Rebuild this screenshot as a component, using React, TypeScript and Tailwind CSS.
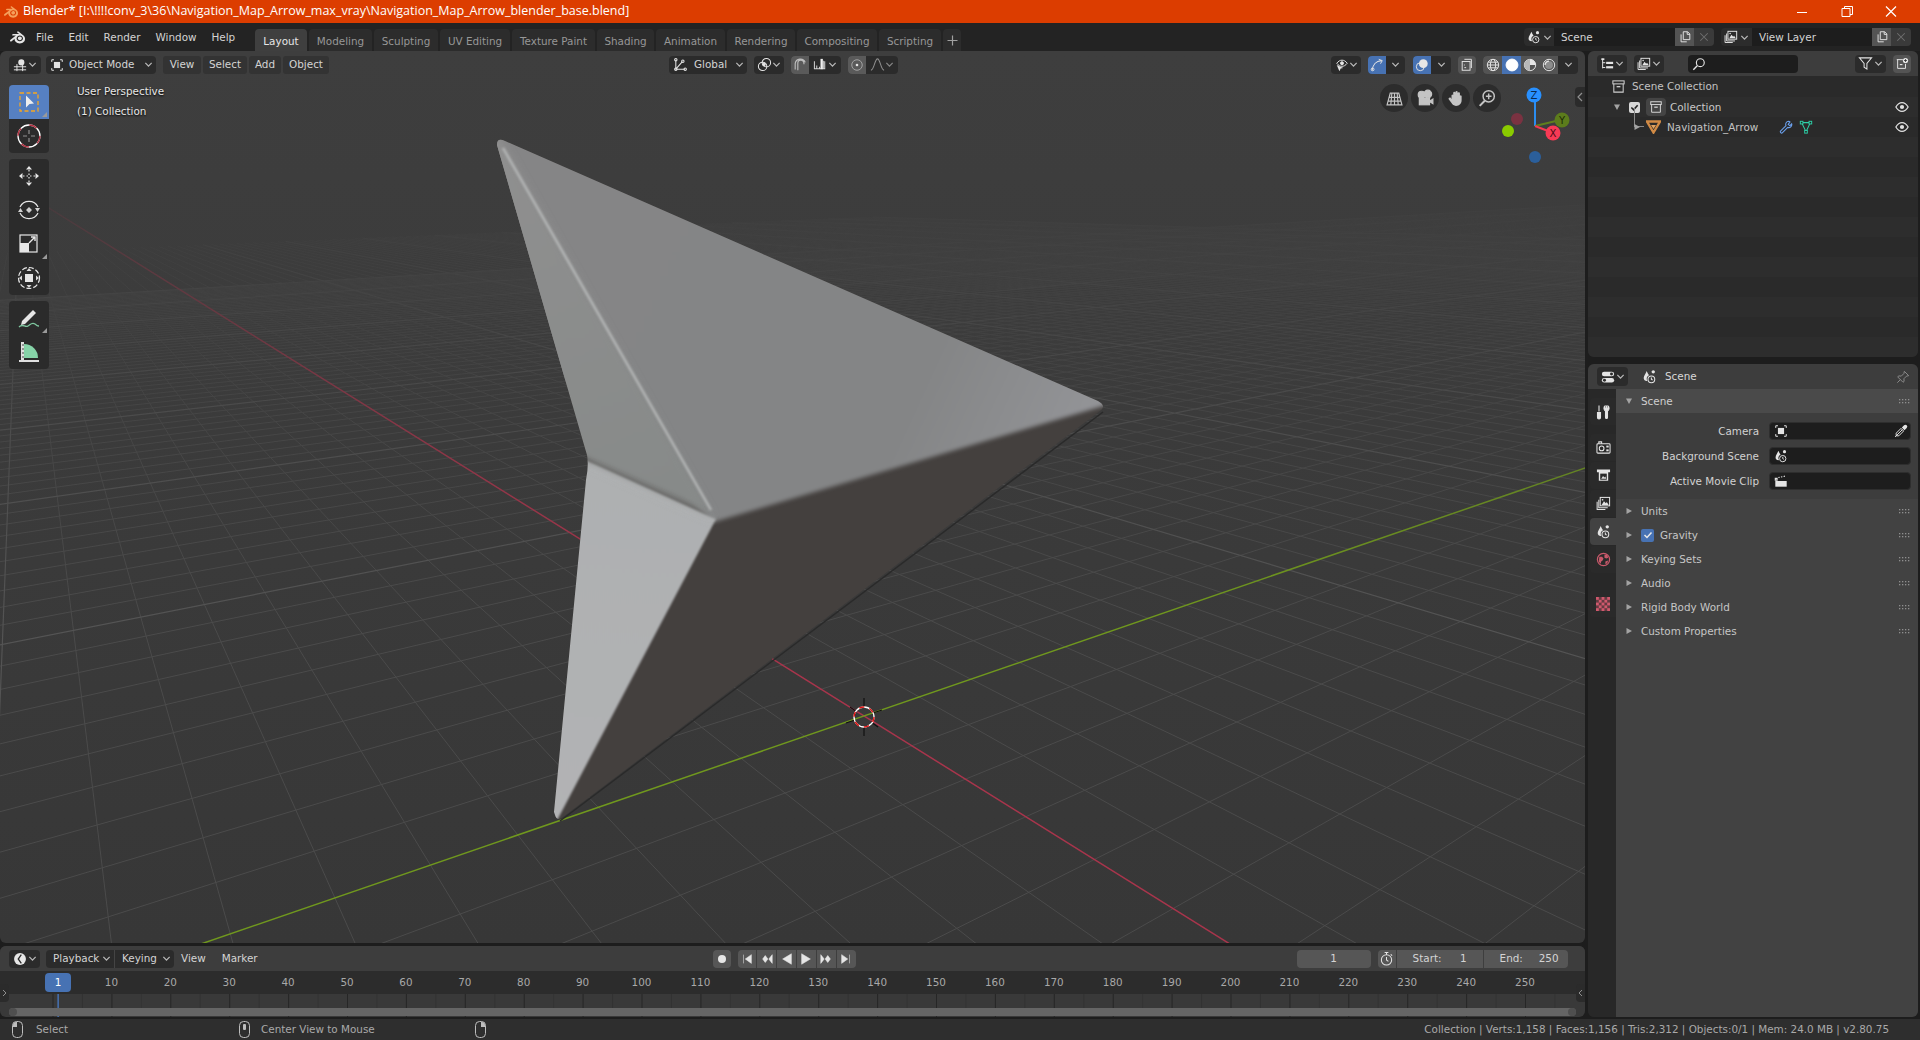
import React, { useMemo } from 'react';
import { SiBlender } from 'react-icons/si';

const Chev = ({ c = '#b8b8b8' }: { c?: string }) => (
  <svg width="9" height="9" viewBox="0 0 10 10" className="shrink-0" fill="none"><path d="M1.5 3.2L5 6.8l3.5-3.6" stroke={c} strokeWidth="1.4" /></svg>
);
const Tri = ({ d = 'r' }: { d?: 'r' | 'd' }) => (
  <svg width="8" height="8" viewBox="0 0 8 8" className="shrink-0"><path d={d === 'r' ? 'M1.5 1L7 4 1.5 7z' : 'M1 1.5h6L4 7z'} fill="#a3a3a3" /></svg>
);
type P = { s?: number; c?: string };
const Box = ({ s = 16, c = '#e4e4e4', children }: P & { children: React.ReactNode }) => (
  <svg width={s} height={s} viewBox="0 0 16 16" fill="none" stroke={c} strokeWidth="1.1" className="shrink-0" style={{ color: c }}>{children}</svg>
);
const SceneI = (p: P) => (
  <Box {...p}><path d="M5 2C4 5 1.8 7 1.8 9.6c0 2 1.5 3.2 3.2 3.2.4 0 .6 0 .8-.1C5.200 11.900 5 11 5 10.300 5 8.500 6.200 7 7.500 6.700 6.500 5 5.600 3.500 5 2z" fill="currentColor" stroke="none" /><circle cx="12" cy="3" r="1.800" fill="currentColor" stroke="none" /><circle cx="10" cy="11" r="3.600" /><path d="M10 9v2l1.300.8" /></Box>
);
const ObjI = (p: P) => (
  <Box {...p}><path d="M2 4.500V2h2.500M11.500 2H14v2.500M14 11.500V14h-2.500M4.500 14H2v-2.500" /><rect x="4.500" y="4.500" width="7" height="7" fill="currentColor" stroke="none" /></Box>
);
const View3DI = (p: P) => (
  <Box {...p}><path d="M1 10h14M1 13.500h14M4.500 7v8M11 8v7" /><circle cx="9.500" cy="5" r="3.500" fill="currentColor" stroke="none" /></Box>
);
const LayerI = (p: P) => (
  <Box {...p}><rect x="4.500" y="1.500" width="10" height="9" /><path d="M3 4v8.500h9.500M1.200 6v8.300h8.800" /><path d="M6 9.500l2.500-4 2 2.200 1-1.200 2 3z" fill="currentColor" stroke="none" /><circle cx="7" cy="4" r=".9" fill="currentColor" stroke="none" /></Box>
);
const CopyI = (p: P) => (
  <Box {...p}><path d="M6 2h5l2.500 2.500V11H6zM3.500 5v8.500H10" /><path d="M10.500 2v3h3" /></Box>
);
const XI = ({ c = '#6f6f6f' }: { c?: string }) => (
  <Box s={12} c={c}><path d="M3 3l10 10M13 3L3 13" strokeWidth="1.400" /></Box>
);
const CollI = (p: P) => (
  <Box {...p}><rect x="2" y="2" width="12" height="3.200" fill="none" /><path d="M3 5.200V14h10V5.200" /><rect x="6" y="7.500" width="4" height="1.400" fill="currentColor" stroke="none" /></Box>
);
const EyeI = () => (
  <Box s={14} c="#e0e0e0"><path d="M1 8c2-3.500 4.300-5 7-5s5 1.500 7 5c-2 3.500-4.300 5-7 5s-5-1.500-7-5z" strokeWidth="1.400" /><circle cx="8" cy="8" r="2.400" fill="currentColor" stroke="none" /></Box>
);
const Grip = () => (
  <svg width="11" height="6" viewBox="0 0 11 6" className="shrink-0" fill="#8f8f8f">
    {[0, 3, 6, 9].map((x) => [0, 3].map((y) => <rect key={x + '-' + y} x={x} y={y + 1} width="1.300" height="1.300" />))}
  </svg>
);
const Mouse = ({ f }: { f: 'l' | 'm' | 'r' }) => (
  <svg width="11" height="17" viewBox="0 0 11 17" fill="none" stroke="#bdbdbd" className="shrink-0">
    <rect x="0.500" y="0.500" width="10" height="16" rx="4" />
    {f === 'l' && <path d="M1 6V4a3.500 3.500 0 0 1 4-3v5z" fill="#bdbdbd" stroke="none" />}
    {f === 'r' && <path d="M10 6V4a3.500 3.500 0 0 0-4-3v5z" fill="#bdbdbd" stroke="none" />}
    {f === 'm' && <rect x="4" y="3" width="3" height="6" rx="1" fill="#bdbdbd" stroke="none" />}
  </svg>
);

function Field({ icon, right }: { icon: React.ReactNode; right?: React.ReactNode }) {
  return (
    <div className="w-[142px] h-[18px] rounded-[4px] bg-[#1d1d1d] border border-[#2e2e2e] flex items-center justify-between pl-[4px] pr-[2px]">
      {icon}
      {right}
    </div>
  );
}
const PropRow = ({ label, icon, right }: { label: string; icon: React.ReactNode; right?: React.ReactNode }) => (
  <div className="h-[18px] flex items-center">
    <div className="w-[143px] pr-[10px] text-right text-[#d2d2d2]">{label}</div>
    <Field icon={icon} right={right} />
  </div>
);
const Panel = ({ label, check }: { label: string; check?: boolean }) => (
  <div className="h-[24px] flex items-center pl-[9px] pr-[8px]">
    <Tri />
    {check && (
      <span className="ml-[8px] w-[13px] h-[13px] rounded-[2px] bg-[#4772b3] flex items-center justify-center">
        <svg width="10" height="10" viewBox="0 0 10 10" fill="none"><path d="M1.500 5l2.500 2.500 4.500-5" stroke="#e8e8e8" strokeWidth="1.500" /></svg>
      </span>
    )}
    <span className={(check ? 'ml-[6px]' : 'ml-[8px]') + ' flex-1 text-[#c6c6c6]'}>{label}</span>
    <Grip />
  </div>
);
const PTab = ({ children, active, mt }: { children: React.ReactNode; active?: boolean; mt?: string }) => (
  <div className={'w-[26px] h-[27px] ml-[2px] rounded-l-[4px] flex items-center justify-center ' + (active ? 'bg-[#424242] ' : 'bg-[#2a2a2a] ') + (mt || '')}>
    {children}
  </div>
);

function ToolBtn({ children, top, bottom, active, corner }: { children: React.ReactNode; top?: boolean; bottom?: boolean; active?: boolean; corner?: boolean }) {
  return (
    <div className={'relative w-[40px] h-[34px] flex items-center justify-center ' + (active ? 'bg-[#5680c2] ' : 'bg-[#2b2b2b] ') + (top ? 'rounded-t-[4px] ' : '') + (bottom ? 'rounded-b-[4px] ' : '')}>
      {children}
      {corner && <span className="absolute right-[2px] bottom-[2px] w-0 h-0 border-l-[5px] border-l-transparent border-b-[5px] border-b-[#9a9a9a]" />}
    </div>
  );
}
const T = ({ children }: { children: React.ReactNode }) => (
  <svg width="24" height="24" viewBox="0 0 24 24" fill="none" stroke="#e6e6e6" strokeWidth="1.200">{children}</svg>
);

const tabs: [string, string, boolean?][] = [
  ['Layout', 'w-[52px]', true], ['Modeling', 'w-[63px]'], ['Sculpting', 'w-[64px]'], ['UV Editing', 'w-[70px]'], ['Texture Paint', 'w-[83px]'],
  ['Shading', 'w-[57px]'], ['Animation', 'w-[69px]'], ['Rendering', 'w-[68px]'], ['Compositing', 'w-[80px]'], ['Scripting', 'w-[62px]'],
];
const menus = ['File', 'Edit', 'Render', 'Window', 'Help'];
const frames = Array.from({ length: 25 }, (_, i) => (i + 1) * 10);
const fx = (f: number) => 58.4 + (f - 1) * 5.89;

function Scene3D() {
  const { minor, major, rAxis, gAxis } = useMemo(() => {
    const O = [864, 716], VR = [20, 190], VG = [2513, 149], a = 0.0536, b = 0.0347;
    const pt = (s: number, t: number) => {
      const w = 1 + s + t;
      return ((O[0] + s * VR[0] + t * VG[0]) / w).toFixed(1) + ' ' + ((O[1] + s * VR[1] + t * VG[1]) / w).toFixed(1);
    };
    let minor = '', major = '';
    for (let u = -18; u <= 80; u++) {
      const s = u * a;
      const d = 'M' + pt(s, -(1 + s) + 0.04) + 'L' + pt(s, 8);
      if (u === 0) continue;
      if (u % 10 === 0) major += d; else minor += d;
    }
    for (let v = -28; v <= 120; v++) {
      const t = v * b;
      const d = 'M' + pt(-(1 + t) + 0.04, t) + 'L' + pt(8, t);
      if (v === 0) continue;
      if (v % 10 === 0) major += d; else minor += d;
    }
    return { minor, major, rAxis: 'M' + pt(-0.97, 0) + 'L' + pt(40, 0), gAxis: 'M' + pt(0, -0.97) + 'L' + pt(0, 40) };
  }, []);
  return (
    <svg width="1585" height="892" viewBox="0 51 1585 892" className="absolute inset-0">
      <defs>
        <linearGradient id="fade" gradientUnits="userSpaceOnUse" x1="0" y1="170" x2="0" y2="620">
          <stop offset="0" stopColor="#000" />
          <stop offset="0.2" stopColor="#444" />
          <stop offset="0.6" stopColor="#bbb" />
          <stop offset="1" stopColor="#fff" />
        </linearGradient>
        <mask id="gm" maskUnits="userSpaceOnUse" x="0" y="51" width="1585" height="892"><rect x="0" y="51" width="1585" height="892" fill="url(#fade)" /></mask>
        <filter id="b1" x="-20%" y="-20%" width="140%" height="140%"><feGaussianBlur stdDeviation="1.200" /></filter>
        <filter id="b2" x="-20%" y="-20%" width="140%" height="140%"><feGaussianBlur stdDeviation="2.200" /></filter>
        <filter id="b3" x="-20%" y="-20%" width="140%" height="140%"><feGaussianBlur stdDeviation="3.500" /></filter>
        <clipPath id="sil"><path d="M497 145Q497 137 505 141L1098 401Q1107 406 1100 411L563 817Q557 822 555 815L554 812L586 480Q589 465 587 455L497 145Z" /></clipPath>
        <linearGradient id="ga" gradientUnits="userSpaceOnUse" x1="600" y1="200" x2="1080" y2="420">
          <stop offset="0" stopColor="#858586" /><stop offset="0.7" stopColor="#848586" /><stop offset="1" stopColor="#929396" />
        </linearGradient>
        <linearGradient id="gc" gradientUnits="userSpaceOnUse" x1="600" y1="480" x2="570" y2="820">
          <stop offset="0" stopColor="#aeb0b1" /><stop offset="1" stopColor="#b2b3b5" />
        </linearGradient>
        <linearGradient id="gb" gradientUnits="userSpaceOnUse" x1="510" y1="150" x2="640" y2="500">
          <stop offset="0" stopColor="#8f8f8f" /><stop offset="1" stopColor="#878a89" />
        </linearGradient>
      </defs>
      <g mask="url(#gm)">
        <path d={minor} stroke="#4b4b4b" strokeWidth="1" fill="none" />
        <path d={major} stroke="#545454" strokeWidth="1.200" fill="none" />
        <path d={rAxis} stroke="#a8354c" strokeWidth="1.500" fill="none" />
        <path d={gAxis} stroke="#70981e" strokeWidth="1.500" fill="none" />
      </g>
      <path d="M1103 412L560 821" stroke="#2a2a2a" strokeWidth="1.500" />
      <g clipPath="url(#sil)">
        <rect x="450" y="100" width="700" height="750" fill="#44403e" />
        <polygon points="714,522 1150,392 1150,300 470,90 480,300" fill="url(#ga)" filter="url(#b2)" />
        <polygon points="588,461 716,519 553,828 530,828 560,440" fill="url(#gc)" filter="url(#b1)" />
        <polygon points="490,120 713,516 588,461 550,440 470,200" fill="url(#gb)" filter="url(#b3)" />
        <path d="M503 148L711 510" stroke="#b4b6b6" strokeWidth="2.500" fill="none" filter="url(#b1)" />
        <path d="M590 466L712 520" stroke="#b8babb" strokeWidth="3" fill="none" filter="url(#b3)" opacity="0.5" />
      </g>
      <g>
        <path d="M864 698v10M864 726v10M846 723l9-3M873 713l9-3M850 707l7 5M871 722l7 5" stroke="#111" strokeWidth="1.200" />
        <circle cx="864" cy="717" r="10" fill="none" stroke="#fff" strokeWidth="1.300" />
        <circle cx="864" cy="717" r="10" fill="none" stroke="#e01212" strokeWidth="1.400" strokeDasharray="5.200 5.270" />
      </g>
    </svg>
  );
}

function Gizmos() {
  return (
    <svg width="70" height="90" viewBox="1500 85 70 90" className="absolute left-[1500px] top-[34px]">
      <circle cx="1517" cy="119" r="6" fill="#7a3241" />
      <circle cx="1508" cy="131" r="6" fill="#8acb00" />
      <circle cx="1535" cy="157" r="6" fill="#2b5f9b" />
      <path d="M1535 126V100" stroke="#2b8df0" strokeWidth="2" />
      <path d="M1535 126L1556 121" stroke="#5f7f1e" strokeWidth="2" />
      <path d="M1535 126L1548 131" stroke="#f53a52" strokeWidth="2" />
      <circle cx="1534" cy="95" r="7.500" fill="#2890ff" />
      <circle cx="1562" cy="120" r="7.500" fill="#5c7c1c" />
      <circle cx="1553" cy="133" r="7.500" fill="#f83a55" />
      <text x="1534" y="98.500" textAnchor="middle" fontSize="10" fontFamily="DejaVu Sans" fill="#0b2a4d">Z</text>
      <text x="1562" y="123.500" textAnchor="middle" fontSize="10" fontFamily="DejaVu Sans" fill="#1c2a06">Y</text>
      <text x="1553" y="136.500" textAnchor="middle" fontSize="10" fontFamily="DejaVu Sans" fill="#4a0a14">X</text>
    </svg>
  );
}

const NavBtn = ({ children }: { children: React.ReactNode }) => (
  <div className="w-[28px] h-[28px] rounded-full bg-[#2c2c2c] flex items-center justify-center">{children}</div>
);

export default function App() {
  return (
    <div className="w-[1920px] h-[1040px] overflow-hidden flex flex-col bg-[#1d1d1d] text-[10.4px] leading-none text-[#d8d8d8] font-['DejaVu_Sans',sans-serif]">
      {/* title bar */}
      <div className="h-[23px] shrink-0 bg-[#dc3d00] flex items-center pl-[4px] text-white font-['Open_Sans',sans-serif] text-[12.500px]">
        <span className="relative w-[14px] h-[14px] mr-[5px] flex items-center justify-center">
          <SiBlender size={14} color="#f5a15c" />
        </span>
        <span className="flex-1">Blender* [I:\!!!!conv_3\36\Navigation_Map_Arrow_max_vray\Navigation_Map_Arrow_blender_base.blend]</span>
        <svg width="110" height="23" viewBox="0 0 110 23" fill="none" stroke="#fff" strokeWidth="1">
          <path d="M1 12.500h10" />
          <path d="M46 8.500h8v8h-8zM48.500 8.500v-2h8v8h-2.500" />
          <path d="M90 6.500l10 10M100 6.500l-10 10" strokeWidth="1.200" />
        </svg>
        <span className="w-[14px]" />
      </div>

      {/* top bar */}
      <div className="h-[28px] shrink-0 bg-[#232323] flex items-end pr-[9px]">
        <div className="flex items-center h-full pl-[10px] w-[255px]">
          <SiBlender size={15} color="#e6e6e6" />
          <div className="flex ml-[11px] gap-[15px] text-[#d4d4d4]">
            {menus.map((m) => <span key={m}>{m}</span>)}
          </div>
        </div>
        <div className="flex gap-[2px] h-[22px]">
          {tabs.map(([t, w, a]) => (
            <div key={t} className={w + ' rounded-t-[4px] flex items-center justify-center pt-[2px] ' + (a ? 'bg-[#3f3f3f] text-[#e6e6e6]' : 'bg-[#2c2c2c] text-[#979797]')}>{t}</div>
          ))}
          <div className="w-[18px] rounded-t-[4px] bg-[#2c2c2c] flex items-center justify-center text-[#9a9a9a]">
            <svg width="11" height="11" viewBox="0 0 11 11" stroke="#a0a0a0" strokeWidth="1.200"><path d="M5.500 0.500v10M0.500 5.500h10" /></svg>
          </div>
        </div>
        <div className="flex-1" />
        <div className="flex items-center h-full gap-[7px]">
          <div className="flex items-center h-[18px] rounded-[4px] bg-[#2c2c2c] w-[190px]">
            <div className="w-[30px] flex items-center justify-center gap-[2px]"><SceneI s={14} /><Chev /></div>
            <div className="w-[121px] h-full bg-[#1d1d1d] flex items-center pl-[7px] text-[#d4d4d4]">Scene</div>
            <div className="w-[19px] h-full bg-[#545454] flex items-center justify-center"><CopyI s={14} /></div>
            <div className="w-[20px] h-full bg-[#3a3a3a] rounded-r-[4px] flex items-center justify-center"><XI /></div>
          </div>
          <div className="flex items-center h-[18px] rounded-[4px] bg-[#2c2c2c] w-[190px]">
            <div className="w-[31px] flex items-center justify-center gap-[2px]"><LayerI s={14} /><Chev /></div>
            <div className="w-[120px] h-full bg-[#1d1d1d] flex items-center pl-[7px] text-[#d4d4d4]">View Layer</div>
            <div className="w-[19px] h-full bg-[#545454] flex items-center justify-center"><CopyI s={14} /></div>
            <div className="w-[20px] h-full bg-[#3a3a3a] rounded-r-[4px] flex items-center justify-center"><XI /></div>
          </div>
        </div>
      </div>

      {/* main */}
      <div className="flex-1 min-h-0 flex pr-[2px]">
        <div className="w-[1585px] flex flex-col gap-[3px] pb-[2px]">
          {/* viewport */}
          <div className="relative h-[892px] rounded-[6px] overflow-hidden bg-linear-to-b from-[#3e3e3e] to-[#373737]">
            <Scene3D />
            <div className="relative h-[24px] flex items-center pt-[3px] text-[#d4d4d4]">
              <div className="ml-[9px] w-[32px] h-[18px] rounded-[4px] bg-[#2b2b2b] flex items-center justify-center gap-[1px]"><View3DI s={14} /><Chev /></div>
              <div className="ml-[5px] w-[110px] h-[18px] rounded-[4px] bg-[#2b2b2b] flex items-center pl-[4px] pr-[3px]"><ObjI s={14} /><span className="ml-[5px] flex-1">Object Mode</span><Chev /></div>
              <div className="ml-[7px] w-[38px] h-[18px] rounded-[3px] bg-[#333333] flex items-center justify-center">View</div>
              <div className="ml-[2px] w-[44px] h-[18px] rounded-[3px] bg-[#333333] flex items-center justify-center">Select</div>
              <div className="ml-[2px] w-[32px] h-[18px] rounded-[3px] bg-[#333333] flex items-center justify-center">Add</div>
              <div className="ml-[2px] w-[46px] h-[18px] rounded-[3px] bg-[#333333] flex items-center justify-center">Object</div>
              <div className="ml-[340px] w-[78px] h-[18px] rounded-[4px] bg-[#2b2b2b] flex items-center pl-[4px] pr-[3px]">
                <Box s={15}><path d="M3 3v10h10M3 13l7-8" /><circle cx="3" cy="3" r="1.300" /><circle cx="13" cy="13" r="1.300" /><circle cx="3" cy="13" r="1.300" /><circle cx="10.500" cy="4.500" r="1.300" /></Box>
                <span className="ml-[6px] flex-1">Global</span><Chev />
              </div>
              <div className="ml-[7px] w-[30px] h-[18px] rounded-[4px] bg-[#2b2b2b] flex items-center justify-center">
                <Box s={15}><circle cx="6" cy="10" r="4.500" /><circle cx="10" cy="6" r="4.500" /><circle cx="7.500" cy="8" r="1.300" fill="currentColor" /></Box><Chev />
              </div>
              <div className="ml-[7px] w-[50px] h-[18px] rounded-[4px] bg-[#2b2b2b] flex items-center overflow-hidden">
                <div className="w-[18px] h-full bg-[#5a5a5a] flex items-center justify-center">
                  <Box s={14} c="#bdbdbd"><path d="M5.500 14V6a3.500 3.500 0 0 1 7 0v1M2.500 13V6.500A6 6 0 0 1 14 5" strokeWidth="1.300" /></Box>
                </div>
                <div className="flex-1 flex items-center justify-center">
                  <Box s={15} c="#d0d0d0"><path d="M1.500 4.500v8h11v-8M4 9v3M7 10.500V12M11 4v9" /><rect x="8" y="2" width="2.500" height="11" fill="#eee" stroke="none" /></Box><Chev />
                </div>
              </div>
              <div className="ml-[7px] w-[50px] h-[18px] rounded-[4px] bg-[#2b2b2b] flex items-center overflow-hidden">
                <div className="w-[18px] h-full bg-[#5a5a5a] flex items-center justify-center">
                  <Box s={14} c="#a6a6a6"><circle cx="8" cy="8" r="6" /><circle cx="8" cy="8" r="1.500" fill="#e6e6e6" stroke="none" /></Box>
                </div>
                <div className="flex-1 flex items-center justify-center">
                  <Box s={15} c="#8f8f8f"><path d="M1 14C4.500 14 5 2 8 2s3.500 12 7 12" /></Box><Chev c="#858585" />
                </div>
              </div>

              <div className="ml-[433px] w-[30px] h-[18px] rounded-[4px] bg-[#2b2b2b] flex items-center justify-center">
                <Box s={14}><path d="M2 6c2-2.500 3.800-3.500 6-3.500S12 3.500 14 6c-2 2.500-3.800 3.500-6 3.500S4 8.500 2 6z" /><circle cx="8" cy="6" r="1.700" fill="currentColor" /><path d="M2 8l3 7 1.500-3 3-.5z" fill="currentColor" stroke="none" /></Box><Chev />
              </div>
              <div className="ml-[7px] w-[37px] h-[18px] rounded-[4px] bg-[#2b2b2b] flex items-center overflow-hidden">
                <div className="w-[18px] h-full bg-[#4772b3] flex items-center justify-center">
                  <Box s={14}><path d="M2.500 14C3 8 7 3.500 13 3" strokeWidth="1.200" /><circle cx="3" cy="13" r="1.600" /><path d="M10 1.500L14 3l-2 3.500" /></Box>
                </div>
                <div className="flex-1 flex items-center justify-center"><Chev /></div>
              </div>
              <div className="ml-[8px] w-[38px] h-[18px] rounded-[4px] bg-[#2b2b2b] flex items-center overflow-hidden">
                <div className="w-[18px] h-full bg-[#4772b3] flex items-center justify-center">
                  <Box s={14}><circle cx="6" cy="10" r="4.500" /><circle cx="9.500" cy="6.500" r="5" fill="#e6e6e6" stroke="none" /></Box>
                </div>
                <div className="flex-1 flex items-center justify-center"><Chev /></div>
              </div>
              <div className="ml-[7px] w-[18px] h-[18px] rounded-[4px] bg-[#545454] flex items-center justify-center">
                <Box s={14}><path d="M5 1.500h8v10" /><rect x="2.500" y="4" width="9" height="10" /><path d="M5 7.500v1M5 11h2" /></Box>
              </div>
              <div className="ml-[7px] w-[95px] h-[18px] rounded-[4px] bg-[#2b2b2b] flex items-center overflow-hidden">
                <div className="w-[19px] h-full bg-[#545454] flex items-center justify-center">
                  <Box s={14}><circle cx="8" cy="8" r="6.500" /><ellipse cx="8" cy="8" rx="3" ry="6.500" /><path d="M1.500 8h13M2.500 4.800h11M2.500 11.200h11" /></Box>
                </div>
                <div className="w-[19px] h-full bg-[#4772b3] flex items-center justify-center"><Box s={14} c="#fff"><circle cx="8" cy="8" r="6.800" fill="#fff" /></Box></div>
                <div className="w-[18px] h-full bg-[#545454] flex items-center justify-center"><Box s={14}><circle cx="8" cy="8" r="6.500" /><path d="M8 1.500a6.500 6.500 0 0 0 0 13z" fill="#b8b8b8" stroke="none" /><path d="M8 1.500a6.500 6.500 0 0 1 6.500 6.500H8z" fill="#e6e6e6" stroke="none" /></Box></div>
                <div className="w-[19px] h-full bg-[#545454] flex items-center justify-center"><Box s={14}><circle cx="8" cy="8" r="6.500" /><circle cx="8" cy="8" r="4.500" fill="#8c8c8c" stroke="none" /><path d="M3.500 8A4.500 4.500 0 0 1 8 3.500" stroke="#e6e6e6" strokeWidth="1.500" /></Box></div>
                <div className="flex-1 flex items-center justify-center"><Chev /></div>
              </div>
            </div>

            {/* tool shelf */}
            <div className="relative w-[40px] ml-[9px] mt-[10px] flex flex-col gap-[6px]">
              <div className="flex flex-col">
                <ToolBtn top active corner>
                  <T><rect x="3" y="3" width="18" height="18" stroke="#f5a623" strokeWidth="1.300" strokeDasharray="4 2.500" /><path d="M9 5.500v12l3.500-3.500 4.500-.5z" fill="#eee" stroke="none" /></T>
                </ToolBtn>
                <ToolBtn bottom>
                  <T><circle cx="12" cy="12" r="11" stroke="#fff" strokeWidth="1.300" /><circle cx="12" cy="12" r="11" stroke="#b03040" strokeWidth="1.400" strokeDasharray="8 9.270" /><path d="M12 6v4M12 14v4M6 12h4M14 12h4" stroke="#8f8f8f" /></T>
                </ToolBtn>
              </div>
              <div className="flex flex-col">
                <ToolBtn top>
                  <T><path d="M12 6v12M6 12h12" strokeDasharray="1.500 2" /><path d="M12 2l3 3.500H9zM12 22l3-3.500H9zM2 12l3.500-3v6zM22 12l-3.500-3v6z" fill="#e6e6e6" stroke="none" /></T>
                </ToolBtn>
                <ToolBtn>
                  <T><path d="M3 9A10 10 0 0 1 21 9M21 15A10 10 0 0 1 3 15" /><path d="M12 9l3 3-3 3-3-3zM1 14l2.500-4 2.500 4zM18 10l2.500 4 2.500-4z" fill="#d0d0d0" stroke="none" /></T>
                </ToolBtn>
                <ToolBtn corner>
                  <T><rect x="3" y="3" width="17" height="17" /><rect x="3" y="11" width="9" height="9" fill="#e6e6e6" stroke="none" /><path d="M12 11l6-6M14 5h4v4" strokeWidth="1.400" /></T>
                </ToolBtn>
                <ToolBtn bottom>
                  <T><circle cx="12" cy="12" r="10.500" strokeDasharray="5 2" /><rect x="8" y="8" width="8" height="8" fill="#e6e6e6" stroke="none" /><path d="M12 2l2.500 3h-5zM12 22l2.500-3h-5zM2 12l3-2.500v5zM22 12l-3-2.500v5z" fill="#d8d8d8" stroke="none" /></T>
                </ToolBtn>
              </div>
              <div className="flex flex-col">
                <ToolBtn top corner>
                  <T><path d="M5 15L16 4l3 3L8 18l-4 1z" fill="#e6e6e6" stroke="none" /><path d="M2 21c4-4 6 1 9-1s4-4 7-2 2 2 4 2" stroke="#7fc8a0" strokeWidth="1.300" /></T>
                </ToolBtn>
                <ToolBtn bottom>
                  <T><path d="M7 4a14 14 0 0 1 14 14H7z" fill="#86d3a8" stroke="none" /><path d="M4 2h3v20H4zM2 20h20v2H2z" fill="#e0e0e0" stroke="none" /><path d="M7 5h-2M7 9h-2M7 13h-2M7 17h-2" stroke="#444" /></T>
                </ToolBtn>
              </div>
            </div>

            {/* overlay text */}
            <div className="absolute left-[77px] top-[35px] flex flex-col gap-[10px] text-[#e8e8e8] [text-shadow:0_1px_2px_#000]">
              <span>User Perspective</span>
              <span>(1) Collection</span>
            </div>
            {/* nav gizmo buttons */}
            <div className="absolute left-[1380px] top-[33px] flex gap-[3px]">
              <NavBtn><Box s={17} c="#c4c4c4"><path d="M4 3h8l3 11H1zM8 3v11M3 7h10M2 10.500h12M5.500 3L4.500 14M10.500 3l1 11" /></Box></NavBtn>
              <NavBtn><Box s={18} c="#c4c4c4"><circle cx="5" cy="5" r="3" fill="currentColor" /><circle cx="10.500" cy="4.500" r="3.400" fill="currentColor" /><rect x="3" y="8.500" width="9" height="5.500" fill="currentColor" /><path d="M12 11l3-2v4z" fill="currentColor" /></Box></NavBtn>
              <NavBtn><Box s={18} c="#c4c4c4"><path d="M4 9V5.500a1 1 0 0 1 1.500-.2V3.500a1 1 0 0 1 2 0V2.800a1 1 0 0 1 2 0v1a1 1 0 0 1 2 .2v2a1 1 0 0 1 1.500.2V10c0 3-2 5-5 5-2 0-3-1-4-2.500L1.500 9c-.5-1 1-2 2-1z" fill="currentColor" stroke="none" /></Box></NavBtn>
              <NavBtn><Box s={18} c="#c4c4c4"><circle cx="9.500" cy="6.500" r="5" strokeWidth="1.300" /><path d="M6 10.500L1.500 15" strokeWidth="1.800" /><path d="M7 6.500h5M9.500 4v5" strokeWidth="1.300" /></Box></NavBtn>
            </div>
            <Gizmos />
            <div className="absolute right-0 top-[36px] w-[10px] h-[20px] rounded-l-[4px] bg-[#2b2b2b] flex items-center justify-center">
              <svg width="6" height="10" viewBox="0 0 6 10" fill="none" stroke="#8f8f8f" strokeWidth="1.200"><path d="M5 1L1 5l4 4" /></svg>
            </div>
          </div>

          {/* timeline */}
          <div className="relative h-[71px] rounded-[6px] overflow-hidden bg-[#393939] flex flex-col">
            <div className="h-[25px] shrink-0 bg-[#3d3d3d] flex items-center text-[#d4d4d4]">
              <div className="ml-[9px] w-[31px] h-[18px] rounded-[4px] bg-[#2b2b2b] flex items-center justify-center gap-[1px]">
                <Box s={14}><circle cx="8" cy="8" r="6.800" fill="#e6e6e6" stroke="none" /><path d="M9.500 3L6 8l3.500 5" stroke="#2b2b2b" strokeWidth="1.500" /></Box><Chev />
              </div>
              <div className="ml-[6px] w-[128px] h-[18px] rounded-[4px] bg-[#2b2b2b] flex items-center">
                <div className="w-[69px] flex items-center justify-between pl-[7px] pr-[3px] border-r border-[#444] h-full">Playback<Chev /></div>
                <div className="flex-1 flex items-center justify-between pl-[7px] pr-[3px]">Keying<Chev /></div>
              </div>
              <span className="ml-[7px]">View</span>
              <span className="ml-[16px]">Marker</span>
              <div className="ml-[455px] w-[18px] h-[18px] rounded-[4px] bg-[#565656] flex items-center justify-center">
                <span className="w-[8px] h-[8px] rounded-full bg-[#e6e6e6]" />
              </div>
              <div className="ml-[7px] w-[118px] h-[18px] rounded-[4px] bg-[#565656] flex items-center">
                {['M4 3v10M13 3v10L6 8z', 'M3 8l3-4 3 4-3 4zM14 3v10L10 8z', 'M13 2v12L3 8z', 'M3 2v12l10-6z', 'M2 3v10L6 8zM10 4l3 4-3 4-3-4z', 'M3 3v10l7-5zM12 3v10'].map((d, i) => (
                  <div key={i} className={'flex-1 h-full flex items-center justify-center ' + (i < 5 ? 'border-r border-[#3e3e3e]' : '')}>
                    <svg width="14" height="14" viewBox="0 0 16 16" fill="#e6e6e6" stroke="#e6e6e6" strokeWidth="0.600"><path d={d} /></svg>
                  </div>
                ))}
              </div>
              <div className="ml-[441px] w-[74px] h-[18px] rounded-[4px] bg-[#565656] flex items-center justify-center">1</div>
              <div className="ml-[7px] w-[190px] h-[18px] rounded-[4px] bg-[#565656] flex items-center">
                <div className="w-[19px] h-full flex items-center justify-center border-r border-[#3e3e3e]">
                  <Box s={15}><circle cx="8" cy="9.500" r="5.500" /><path d="M8 6.500v3l2 1.500M6 1.500h4M8 1.500v2.500M12.500 3.500l1.500 1.500" /></Box>
                </div>
                <div className="w-[87px] h-full flex items-center justify-between px-[16px] border-r border-[#3e3e3e]"><span>Start:</span><span>1</span></div>
                <div className="flex-1 h-full flex items-center justify-between pl-[16px] pr-[9px]"><span>End:</span><span>250</span></div>
              </div>
            </div>
            <div className="relative h-[23px] shrink-0 bg-[#2c2c2c] text-[#a8a8a8]">
              {frames.map((f) => (
                <span key={f} className="absolute top-[6px] -translate-x-1/2" style={{ left: fx(f) }}>{f}</span>
              ))}
            </div>
            <div className="relative flex-1">
              <svg width="1585" height="23" className="absolute inset-0">
                {Array.from({ length: 52 }, (_, i) => i * 5).map((f) => (
                  <line key={f} x1={fx(f) + 0.5} x2={fx(f) + 0.5} y1="0" y2={f % 10 === 0 ? 23 : 15} stroke={f % 10 === 0 ? '#262626' : '#333333'} />
                ))}
                <rect x={fx(1) - 1} y="0" width="1.500" height="23" fill="#4772b3" />
              </svg>
              <div className="absolute left-[9px] right-[9px] top-[14px] h-[8px] rounded-full bg-[#656565]">
                <span className="absolute left-0 top-0 w-[8px] h-[8px] rounded-full bg-[#4f4f4f]" />
                <span className="absolute right-0 top-0 w-[8px] h-[8px] rounded-full bg-[#4f4f4f]" />
              </div>
            </div>
            <div className="absolute left-[45px] top-[27px] w-[26px] h-[19px] rounded-[4px] bg-[#4772b3] text-white flex items-center justify-center">1</div>
            <div className="absolute left-0 top-[38px] w-[9px] h-[18px] rounded-r-[4px] bg-[#2b2b2b] flex items-center justify-center">
              <svg width="5" height="8" viewBox="0 0 5 8" fill="none" stroke="#8f8f8f"><path d="M1 1l3 3-3 3" /></svg>
            </div>
            <div className="absolute right-0 top-[38px] w-[9px] h-[18px] rounded-l-[4px] bg-[#2b2b2b] flex items-center justify-center">
              <svg width="5" height="8" viewBox="0 0 5 8" fill="none" stroke="#8f8f8f"><path d="M4 1L1 4l3 3" /></svg>
            </div>
          </div>
        </div>

        {/* right column */}
        <div className="ml-[3px] flex-1 flex flex-col gap-[7px] pb-[2px]">
          {/* outliner */}
          <div className="h-[306px] rounded-[6px] overflow-hidden bg-[#282828] flex flex-col shrink-0">
            <div className="h-[25px] shrink-0 bg-[#3d3d3d] flex items-center">
              <div className="ml-[9px] w-[30px] h-[18px] rounded-[4px] bg-[#2b2b2b] flex items-center justify-center gap-[1px]">
                <Box s={14}><path d="M3 2v11M3 6.500h3M3 12h3" /><rect x="1.500" y="1.500" width="3.500" height="2" fill="currentColor" stroke="none" /><rect x="7" y="5.500" width="8" height="2.500" fill="currentColor" stroke="none" /><rect x="7" y="10.500" width="8" height="2.500" fill="currentColor" stroke="none" /></Box><Chev />
              </div>
              <div className="ml-[7px] w-[30px] h-[18px] rounded-[4px] bg-[#2b2b2b] flex items-center justify-center gap-[1px]"><LayerI s={14} /><Chev /></div>
              <div className="ml-[24px] w-[110px] h-[18px] rounded-[4px] bg-[#1d1d1d] flex items-center pl-[4px]">
                <Box s={14}><circle cx="9.500" cy="6.500" r="4.500" strokeWidth="1.300" /><path d="M6 10L1.500 14.500" strokeWidth="1.600" /></Box>
              </div>
              <div className="ml-[57px] w-[31px] h-[18px] rounded-[4px] bg-[#2b2b2b] flex items-center justify-center gap-[1px]">
                <Box s={15}><path d="M1.500 2h13L9.500 8v6l-3-2V8z" /></Box><Chev />
              </div>
              <div className="ml-[7px] w-[18px] h-[18px] rounded-[4px] bg-[#545454] flex items-center justify-center">
                <Box s={14}><path d="M2 3h7M3 3v10h9V8" /><rect x="5.500" y="8" width="3" height="1.300" fill="currentColor" stroke="none" /><circle cx="12" cy="4" r="3" fill="currentColor" stroke="none" /><path d="M12 2.500v3M10.500 4h3" stroke="#333" /></Box>
              </div>
            </div>
            <div className="flex-1 flex flex-col text-[#c2c2c2]">
              <div className="h-[21px] shrink-0 flex items-center bg-[#2a2a2a] pl-[23px]">
                <CollI s={15} c="#cfcfcf" /><span className="ml-[6px]">Scene Collection</span>
              </div>
              <div className="relative h-[20px] shrink-0 flex items-center bg-[#2d2d2d] pl-[25px] pr-[9px]">
                <Tri d="d" />
                <span className="ml-[8px] w-[11px] h-[11px] rounded-[2px] bg-[#d8d8d8] flex items-center justify-center">
                  <svg width="9" height="9" viewBox="0 0 10 10" fill="none"><path d="M1.500 5l2.500 2.500 4.500-5" stroke="#222" strokeWidth="1.800" /></svg>
                </span>
                <span className="ml-[6px] w-[20px] h-[18px] rounded-[4px] bg-[#444] flex items-center justify-center"><CollI s={14} c="#d8d8d8" /></span>
                <span className="ml-[4px] flex-1 text-[#c8c8c8]">Collection</span>
                <EyeI />
              </div>
              <div className="relative h-[20px] shrink-0 flex items-center bg-[#2a2a2a] pl-[45px] pr-[9px]">
                <span className="absolute left-[46px] -top-[9px] w-[10px] h-[19px] border-l border-b border-[#8a8a8a]" />
                <span className="relative"><Tri /></span>
                <span className="relative ml-[5px]">
                  <svg width="15" height="14" viewBox="0 0 15 14" fill="none" className="shrink-0"><path d="M1 1.500h13L7.500 12.500z" stroke="#d08a45" strokeWidth="2.400" /><path d="M5 5h5L7.500 9z" fill="#e0a260" /></svg>
                </span>
                <span className="ml-[6px] w-[112px]">Navigation_Arrow</span>
                <Box s={14} c="#6ba0ec"><path d="M11 1.500a3.500 3.500 0 0 0-3 5L2 12.500a1.400 1.400 0 0 0 2 2l6-6a3.500 3.500 0 0 0 4.500-4.200L12.500 6.500 10.500 5l2-2.800c-.4-.5-1-.7-1.500-.7z" strokeWidth="1.200" /></Box>
                <span className="ml-[6px]"><Box s={14} c="#2fd0a8"><path d="M3 3h10L8 13.500z" strokeWidth="1.200" /><rect x="1.500" y="1.500" width="3" height="3" fill="#222" /><rect x="11.500" y="1.500" width="3" height="3" fill="#222" /><rect x="6.500" y="12" width="3" height="3" fill="#222" /></Box></span>
                <span className="flex-1" />
                <EyeI />
              </div>
              {Array.from({ length: 11 }, (_, i) => (
                <div key={i} className={'h-[20px] shrink-0 ' + (i % 2 === 0 ? 'bg-[#2d2d2d]' : 'bg-[#2a2a2a]')} />
              ))}
            </div>
          </div>

          {/* properties */}
          <div className="flex-1 min-h-0 rounded-[6px] overflow-hidden flex flex-col bg-[#282828]">
            <div className="h-[25px] shrink-0 bg-[#3d3d3d] flex items-center pr-[8px] text-[#d8d8d8]">
              <div className="ml-[9px] w-[31px] h-[19px] rounded-[4px] bg-[#2b2b2b] flex items-center justify-center gap-[1px]">
                <Box s={14}><rect x="1" y="2" width="14" height="5.200" rx="2.600" fill="currentColor" stroke="none" /><circle cx="12" cy="4.600" r="1.700" fill="#2b2b2b" stroke="none" /><rect x="1" y="9" width="14" height="5.200" rx="2.600" fill="currentColor" stroke="none" /><circle cx="4" cy="11.600" r="1.700" fill="#2b2b2b" stroke="none" /></Box><Chev />
              </div>
              <span className="ml-[14px]"><SceneI s={15} /></span>
              <span className="ml-[8px] flex-1">Scene</span>
              <Box s={14} c="#8c8c8c"><path d="M9.500 1.500l5 5-2.500.5-3 3 .3 3L8 14 2 8l1-1.300 3 .3 3-3zM5 11l-3.500 3.500" /></Box>
            </div>
            <div className="flex-1 flex min-h-0">
              <div className="w-[28px] shrink-0 bg-[#282828] flex flex-col pt-[9px]">
                <PTab><Box s={16}><path d="M4 1.500v6M2.500 8.500h3v5a1.500 1.500 0 0 1-3 0z" fill="currentColor" /><path d="M11.500 1.500v3L10 4V2C8.500 3 8.500 6 10.500 7v6.500a1 1 0 0 0 2 0V7c2-1 2-4 .5-5v2l-1.500.5" fill="currentColor" /></Box></PTab>
                <PTab mt="mt-[9px]"><Box s={15}><rect x="1" y="4" width="14" height="10" rx="1" /><path d="M3 4V2h3v2" /><circle cx="6" cy="9" r="2.500" /><rect x="11" y="6" width="2.500" height="2" fill="currentColor" stroke="none" /><rect x="11" y="10" width="2.500" height="2" fill="currentColor" stroke="none" /></Box></PTab>
                <PTab mt="mt-[1px]"><Box s={15}><path d="M1 1.500h14v3H13V13.500H3V4.500H1z" fill="currentColor" stroke="none" /><rect x="4.500" y="6" width="7" height="6.500" fill="#2a2a2a" stroke="none" /><path d="M5.500 11.500l2-3 1.500 1.500 1-1 1 2.500z" fill="#ddd" stroke="none" /></Box></PTab>
                <PTab mt="mt-[1px]"><LayerI s={15} /></PTab>
                <PTab active mt="mt-[1px]"><SceneI s={15} /></PTab>
                <PTab mt="mt-[1px]"><Box s={15} c="#c9596b"><circle cx="8" cy="8" r="6.500" strokeWidth="1.300" /><path d="M3.500 5l3 0 1.500 2-1 2-1.500 1-.5 2.500-2-2zM9 3h3l1 3-2 1-2-1zM10 10l3-1-1 3-2 1z" fill="currentColor" stroke="none" /></Box></PTab>
                <PTab mt="mt-[17px]">
                  <svg width="14" height="14" viewBox="0 0 14 14" fill="#d0596e">
                    {Array.from({ length: 25 }, (_, i) => i).filter((i) => i % 2 === 0).map((i) => <rect key={i} x={(i % 5) * 2.800} y={Math.floor(i / 5) * 2.800} width="2.800" height="2.800" />)}
                    <rect width="14" height="14" fill="#d0596e" opacity="0.350" />
                  </svg>
                </PTab>
              </div>
              <div className="flex-1 bg-[#424242] flex flex-col">
                <div className="h-[24px] shrink-0 bg-[#4a4a4a] flex items-center pl-[9px] pr-[8px]">
                  <Tri d="d" /><span className="ml-[8px] flex-1 text-[#cfcfcf]">Scene</span><Grip />
                </div>
                <div className="h-[86px] shrink-0 bg-[#3d3d3d] pt-[9px] pl-[10px] flex flex-col gap-[7px]">
                  <PropRow label="Camera" icon={<ObjI s={14} />} right={<Box s={14}><path d="M9.500 6.500L3 13l-1.500 1.500L3 13" /><path d="M8 5l3 3-5.500 5.500H2.500v-3z" strokeWidth="1.100" /><path d="M9 4l3 3 2.500-2.500a2 2 0 0 0-3-3z" fill="currentColor" stroke="none" /></Box>} />
                  <PropRow label="Background Scene" icon={<SceneI s={14} />} />
                  <PropRow label="Active Movie Clip" icon={<Box s={14}><rect x="1.500" y="8" width="13" height="6.500" fill="currentColor" stroke="none" /><path d="M1.500 5h2v2h-2zM5 4l1.500-.3M8 3.500l1.500-.4M11 2.800l1.500-.4" strokeWidth="1.300" /></Box>} />
                </div>
                <Panel label="Units" />
                <Panel label="Gravity" check />
                <Panel label="Keying Sets" />
                <Panel label="Audio" />
                <Panel label="Rigid Body World" />
                <Panel label="Custom Properties" />
              </div>
            </div>
          </div>
        </div>
      </div>

      {/* status bar */}
      <div className="h-[21px] shrink-0 bg-[#2e2e2e] flex items-center text-[#a9a9a9]">
        <span className="ml-[12px]"><Mouse f="l" /></span>
        <span className="ml-[13px] w-[190px]">Select</span>
        <span className="ml-[13px]"><Mouse f="m" /></span>
        <span className="ml-[11px] w-[203px]">Center View to Mouse</span>
        <span className="ml-[11px]"><Mouse f="r" /></span>
        <span className="flex-1 text-right pr-[31px]">Collection | Verts:1,158 | Faces:1,156 | Tris:2,312 | Objects:0/1 | Mem: 24.0 MB | v2.80.75</span>
      </div>
    </div>
  );
}
